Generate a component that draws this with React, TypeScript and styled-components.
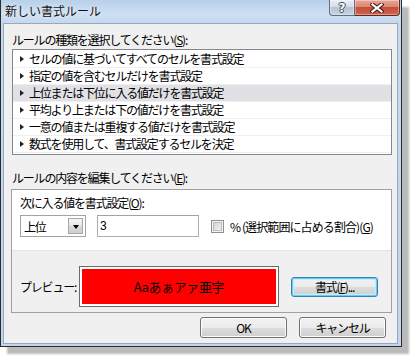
import React from "react";
import styled, { createGlobalStyle } from "styled-components";

const Global = createGlobalStyle`
  html, body { margin: 0; padding: 0; background: #ffffff; }
  body {
    font-family: "Noto Sans CJK JP", "Noto Sans", sans-serif;
    font-size: 12px;
    color: #000;
  }
  #root { width: 411px; height: 356px; overflow: hidden; }
`;

const Window = styled.div`
  width: 402px;
  height: 347px;
  box-sizing: border-box;
  border: 1px solid #2b2b2b;
  border-top: none;
  background: linear-gradient(to bottom, #b9d0ea 0px, #cddff2 14px, #c6d8ee 23px, #c3d6ec 100%);
  box-shadow: 7px 7px 2px rgba(0, 0, 0, 0.27);
  display: flex;
  flex-direction: column;
  padding: 0 3px 2px 2px;
`;

const TitleBar = styled.div`
  height: 23px;
  display: flex;
  align-items: flex-start;
  margin-right: -2px;
`;

const Title = styled.div`
  padding: 3px 0 0 2px;
  font-size: 12px;
  line-height: 15px;
  color: #111;
  text-shadow: 0 0 4px rgba(255, 255, 255, 0.9);
`;

const Captions = styled.div`
  margin-left: auto;
  display: flex;
  height: 16px;
`;

const CapBtn = styled.div<{ $close?: boolean }>`
  box-sizing: border-box;
  height: 16px;
  width: ${(p) => (p.$close ? 45 : 26)}px;
  border: 1px solid ${(p) => (p.$close ? "#5e2a22" : "#5f6e80")};
  border-top: none;
  border-left: ${(p) => (p.$close ? "none" : "1px solid #5f6e80")};
  border-radius: ${(p) => (p.$close ? "0 0 4px 0" : "0 0 0 4px")};
  background: ${(p) =>
    p.$close
      ? "linear-gradient(to bottom, #e9a797 0%, #dc8672 45%, #c64d38 50%, #cf6650 100%)"
      : "linear-gradient(to bottom, #e7eef7 0%, #d3dde9 45%, #b6c4d6 50%, #c6d3e3 100%)"};
  box-shadow: inset 0 0 0 1px rgba(255, 255, 255, 0.35);
  display: flex;
  align-items: center;
  justify-content: center;
`;

const Question = styled.span`
  font-family: "DejaVu Sans", sans-serif;
  font-weight: bold;
  font-size: 12px;
  line-height: 12px;
  color: #fff;
  text-shadow: 1px 0 0 #3b4656, -1px 0 0 #3b4656, 0 1px 0 #3b4656, 0 -1px 0 #3b4656;
`;

const Client = styled.div`
  flex: 1;
  border: 1px solid #96a8bd;
  background: #f0f0f0;
  padding: 9px 5px 0 8px;
  display: flex;
  flex-direction: column;
`;

const Label = styled.div`
  line-height: 14px;
  height: 14px;
  letter-spacing: -1.2px;
  white-space: nowrap;
`;

const U = styled.span`
  text-decoration: underline;
  text-underline-offset: 1px;
`;

const List = styled.div`
  margin-top: 2px;
  border: 1px solid #828790;
  background: #fff;
  padding-top: 1px;
  height: 103px;
  box-sizing: content-box;
`;

const Row = styled.div<{ $selected?: boolean }>`
  height: 16px;
  border-bottom: 1px solid #efefef;
  background: ${(p) => (p.$selected ? "#e0e0e5" : "#fff")};
  display: flex;
  align-items: center;
  padding-left: 7px;
  line-height: 16px;
  letter-spacing: -1.2px;
  white-space: nowrap;
`;

const Arrow = styled.span`
  width: 0;
  height: 0;
  border-left: 4px solid #222;
  border-top: 3.5px solid transparent;
  border-bottom: 3.5px solid transparent;
  margin-right: 5px;
`;

const Label2 = styled(Label)`
  margin-top: 16px;
`;

const Group = styled.div`
  margin-top: 4px;
  margin-left: -1px;
  border: 1px solid #a0a0a0;
  display: flex;
  flex-direction: column;
`;

const Upper = styled.div`
  background: #fff;
  height: 61px;
  box-sizing: border-box;
  padding: 6px 0 0 8px;
  border-bottom: 1px solid #e3e3e3;
`;

const Controls = styled.div`
  margin-top: 5px;
  display: flex;
  align-items: center;
  height: 22px;
`;

const Combo = styled.div`
  box-sizing: border-box;
  width: 66px;
  height: 22px;
  border: 1px solid #a3a3a3;
  background: #fff;
  display: flex;
  align-items: center;
  padding: 0 2px 0 3px;
  letter-spacing: -1.2px;
`;

const DropBtn = styled.div`
  margin-left: auto;
  box-sizing: border-box;
  width: 15px;
  height: 16px;
  border: 1px solid #a7a7a7;
  background: linear-gradient(to bottom, #f4f4f4 0%, #e6e6e6 50%, #d9d9d9 51%, #cfcfcf 100%);
  display: flex;
  align-items: center;
  justify-content: center;
`;

const DownArrow = styled.span`
  width: 0;
  height: 0;
  border-top: 4px solid #000;
  border-left: 3.5px solid transparent;
  border-right: 3.5px solid transparent;
  margin-top: 1px;
`;

const TextBox = styled.div`
  margin-left: 11px;
  box-sizing: border-box;
  width: 102px;
  height: 22px;
  border: 1px solid #abadb3;
  border-top-color: #a0a2a8;
  background: #fff;
  padding-left: 2px;
  line-height: 20px;
  font-family: "Liberation Sans", sans-serif;
`;

const Check = styled.div`
  margin-left: 12px;
  box-sizing: border-box;
  width: 13px;
  height: 13px;
  border: 1px solid #8f8f8f;
  background: linear-gradient(135deg, #c9ccd1 0%, #e4e5e8 55%, #f6f6f6 100%);
  box-shadow: inset 0 0 0 1px #f4f4f4, inset 0 0 0 2px #b9bcc2;
`;

const CheckLabel = styled.span`
  margin-left: 6px;
  letter-spacing: -0.9px;
  white-space: nowrap;
`;

const Lower = styled.div`
  height: 61px;
  box-sizing: border-box;
  padding: 15px 0 0 8px;
  display: flex;
  align-items: flex-start;
`;

const PreviewLabel = styled.div`
  width: 59px;
  height: 41px;
  line-height: 41px;
  letter-spacing: -1.2px;
  white-space: nowrap;
`;

const PreviewBox = styled.div`
  box-sizing: border-box;
  width: 200px;
  height: 41px;
  border: 1px solid #6b6b6b;
  background: #fff;
  padding: 2px;
`;

const PreviewFill = styled.div`
  width: 100%;
  height: 100%;
  background: #ff0000;
  display: flex;
  align-items: center;
  justify-content: center;
  font-size: 13px;
  letter-spacing: -0.4px;
  color: #000;
`;

const Button = styled.div<{ $focus?: boolean; $ml?: number }>`
  box-sizing: border-box;
  width: 87px;
  height: ${(p) => (p.$focus ? 20 : 21)}px;
  margin-left: ${(p) => p.$ml ?? 0}px;
  border: 1px solid ${(p) => (p.$focus ? "#3c7fb1" : "#707070")};
  border-radius: 3px;
  background: linear-gradient(to bottom, #f2f2f2 0%, #ebebeb 50%, #dddddd 50%, #cfcfcf 100%);
  box-shadow: ${(p) =>
    p.$focus
      ? "inset 0 0 0 1px #5fd0f5, inset 0 0 0 2px #c9ecfb"
      : "inset 0 0 0 1px #fcfcfc"};
  display: flex;
  align-items: center;
  justify-content: center;
  letter-spacing: -1.2px;
  white-space: nowrap;
`;

const FormatWrap = styled.div`
  margin-left: 12px;
  height: 41px;
  display: flex;
  align-items: center;
`;

const Footer = styled.div`
  margin-top: 4px;
  display: flex;
  justify-content: flex-end;
  padding-right: 6px;
`;

const items = [
  "セルの値に基づいてすべてのセルを書式設定",
  "指定の値を含むセルだけを書式設定",
  "上位または下位に入る値だけを書式設定",
  "平均より上または下の値だけを書式設定",
  "一意の値または重複する値だけを書式設定",
  "数式を使用して、書式設定するセルを決定",
];

const CloseIcon = () => (
  <svg width="14" height="10" viewBox="0 0 14 10">
    <path d="M2.5 1.5 L11.5 8.5 M11.5 1.5 L2.5 8.5" stroke="#4a1c16" strokeWidth="4.2" strokeLinecap="square" />
    <path d="M2.5 1.5 L11.5 8.5 M11.5 1.5 L2.5 8.5" stroke="#ffffff" strokeWidth="2.2" strokeLinecap="square" />
  </svg>
);

export default function App() {
  return (
    <>
      <Global />
      <Window>
        <TitleBar>
          <Title>新しい書式ルール</Title>
          <Captions>
            <CapBtn>
              <Question>?</Question>
            </CapBtn>
            <CapBtn $close>
              <CloseIcon />
            </CapBtn>
          </Captions>
        </TitleBar>
        <Client>
          <Label>
            ルールの種類を選択してください(<U>S</U>):
          </Label>
          <List>
            {items.map((t, i) => (
              <Row key={t} $selected={i === 2}>
                <Arrow />
                {t}
              </Row>
            ))}
          </List>
          <Label2>
            ルールの内容を編集してください(<U>E</U>):
          </Label2>
          <Group>
            <Upper>
              <Label>
                次に入る値を書式設定(<U>O</U>):
              </Label>
              <Controls>
                <Combo>
                  上位
                  <DropBtn>
                    <DownArrow />
                  </DropBtn>
                </Combo>
                <TextBox>3</TextBox>
                <Check />
                <CheckLabel>
                  % (選択範囲に占める割合)(<U>G</U>)
                </CheckLabel>
              </Controls>
            </Upper>
            <Lower>
              <PreviewLabel>プレビュー:</PreviewLabel>
              <PreviewBox>
                <PreviewFill>Aaあぁアァ亜宇</PreviewFill>
              </PreviewBox>
              <FormatWrap>
                <Button $focus>
                  書式(<U>F</U>)...
                </Button>
              </FormatWrap>
            </Lower>
          </Group>
          <Footer>
            <Button>OK</Button>
            <Button $ml={12}>キャンセル</Button>
          </Footer>
        </Client>
      </Window>
    </>
  );
}
